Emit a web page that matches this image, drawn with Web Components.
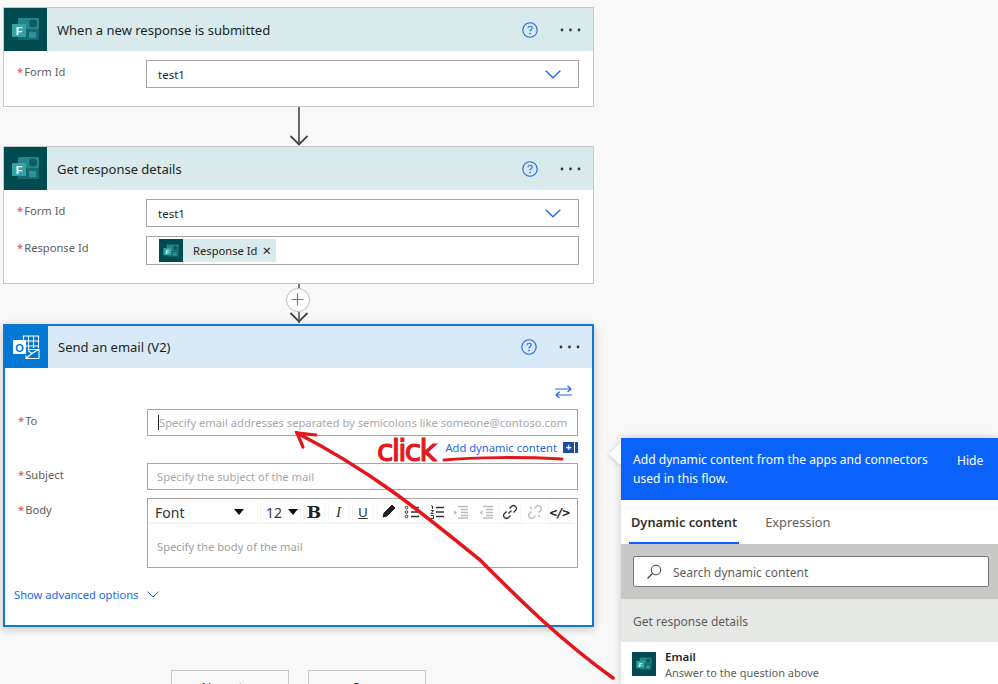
<!DOCTYPE html>
<html>
<head>
<meta charset="utf-8">
<title>Flow</title>
<style>
html, body { margin: 0; height: 684px; overflow: hidden; background: #f8f8f8; }
body { font-family: "Noto Sans", "Open Sans", sans-serif; font-size: 12px; color: #252423; }
</style>
</head>
<body>

<flow-canvas>
  <flow-card title="When a new response is submitted" icon="forms">
    <flow-field label="Form Id"><flow-input value="test1" dropdown></flow-input></flow-field>
  </flow-card>
  <flow-arrow></flow-arrow>
  <flow-card title="Get response details" icon="forms">
    <flow-field label="Form Id"><flow-input value="test1" dropdown></flow-input></flow-field>
    <flow-field label="Response Id"><flow-input token="Response Id"></flow-input></flow-field>
  </flow-card>
  <flow-arrow plus></flow-arrow>
  <flow-card title="Send an email (V2)" icon="outlook" active>
    <swap-row></swap-row>
    <flow-field label="To" tight><flow-input placeholder="Specify email addresses separated by semicolons like someone@contoso.com" caret></flow-input></flow-field>
    <dynamic-link></dynamic-link>
    <flow-field label="Subject" style="padding-bottom:8px"><flow-input placeholder="Specify the subject of the mail"></flow-input></flow-field>
    <flow-field label="Body"><rich-editor placeholder="Specify the body of the mail"></rich-editor></flow-field>
    <advanced-link></advanced-link>
  </flow-card>
  <flow-actions></flow-actions>
</flow-canvas>

<dynamic-panel></dynamic-panel>
<red-notes></red-notes>

<script>
const blue = '#2266ee'

const formsGlyph = (s) => `<svg width="${s}" height="${s}" viewBox="0 0 43 43">
  <rect x="14" y="10" width="21" height="11" rx="1" fill="#22868c"/>
  <circle cx="29" cy="15.5" r="4" fill="#0e5b61"/>
  <rect x="14" y="21" width="21" height="11" rx="1" fill="#146a70"/>
  <rect x="25" y="24" width="7" height="6" fill="#2a9298"/>
  <rect x="8" y="16" width="14" height="13" rx="1" fill="#30a3a8"/>
  <text x="15" y="27" text-anchor="middle" font-family="Liberation Sans" font-weight="700" font-size="11" fill="#fff">F</text>
</svg>`

const outlookGlyph = `<svg width="43" height="42" viewBox="0 0 43 42">
  <g fill="none" stroke="#fff" stroke-width="1.1">
    <path d="M18.500 14v-4h15v12M23.500 10v13M28.500 10v12M20 15h13.500M20 20h13.500"/>
    <path d="M22.500 23.500h11.500v9H21v-3M21.500 32l6-5M34 23l-7 4.500-4-3"/>
  </g>
  <rect x="8" y="14" width="13" height="14" rx="1" fill="#fff"/>
  <text x="14.5" y="25.500" text-anchor="middle" font-family="Liberation Sans" font-weight="700" font-size="11" fill="#0078d4">O</text>
</svg>`

class FlowCanvas extends HTMLElement {
  constructor() {
    super()
    this.attachShadow({ mode: 'open' }).innerHTML = `
    <style>
      :host { display: flex; flex-direction: column; width: 591px; height: 677px; overflow: hidden; padding: 7px 8px 0 3px; }
    </style>
    <slot></slot>`
  }
}

class FlowCard extends HTMLElement {
  constructor() {
    super()
    const outlook = this.getAttribute('icon') === 'outlook'
    this.attachShadow({ mode: 'open' }).innerHTML = `
    <style>
      :host { display: block; box-sizing: border-box; width: 591px; flex: none; background: #fff;
        border: 1px solid #c8c8c8; padding-bottom: 9px; }
      :host([active]) { border: 2px solid #0f78d2; padding-bottom: 0; height: 303px;
        box-shadow: 0 2px 8px rgba(0,0,0,.22); }
      .head { display: flex; align-items: center; height: 43px; background: #d8eaec; }
      :host([active]) .head { background: #d8e9f7; height: 42px; }
      .icon { width: 43px; height: 100%; background: #004b50; flex: none; display: flex; }
      :host([active]) .icon { background: #0078d4; }
      .name { flex: 1; margin-left: 10px; font-size: 13px; color: #201f1e; }
      .help { margin-right: 22px; display: block; }
      .dots { margin-right: 12px; display: block; }
      .body { padding-top: 9px; display: flex; flex-direction: column; }
      :host([active]) .body { padding-top: 14px; }
    </style>
    <div class="head">
      <div class="icon">${outlook ? outlookGlyph : formsGlyph(43)}</div>
      <div class="name">${this.getAttribute('title')}</div>
      <svg class="help" width="16" height="16" viewBox="0 0 16 16">
        <circle cx="8" cy="8" r="7.2" fill="none" stroke="${blue}" stroke-width="1.1"/>
        <path d="M5.9 6.2C6 4.8 7 4.2 8 4.2c1.2 0 2.1.8 2.1 1.9 0 1.7-2.1 1.6-2.1 3.4" fill="none" stroke="${blue}" stroke-width="1.1"/>
        <circle cx="8" cy="11.6" r=".8" fill="${blue}"/>
      </svg>
      <svg class="dots" width="21" height="4" viewBox="0 0 21 4">
        <circle cx="2" cy="2" r="1.4" fill="#333"/><circle cx="10.5" cy="2" r="1.4" fill="#333"/><circle cx="19" cy="2" r="1.4" fill="#333"/>
      </svg>
    </div>
    <div class="body"><slot></slot></div>`
  }
}

class FlowField extends HTMLElement {
  constructor() {
    super()
    this.attachShadow({ mode: 'open' }).innerHTML = `
    <style>
      :host { display: flex; padding: 0 14px 9px 13px; }
      :host([tight]) { padding-bottom: 0; }
      .label { width: 129px; flex: none; font-size: 11.2px; line-height: 18px; color: #605e5c; padding-top: 3px; }
      .label b { color: #e8414b; font-weight: 400; margin-right: 1px; }
      .slot { flex: 1; min-width: 0; }
    </style>
    <div class="label"><b>*</b>${this.getAttribute('label')}</div>
    <div class="slot"><slot></slot></div>`
  }
}

class FlowInput extends HTMLElement {
  constructor() {
    super()
    const value = this.getAttribute('value')
    const placeholder = this.getAttribute('placeholder')
    const token = this.getAttribute('token')
    this.attachShadow({ mode: 'open' }).innerHTML = `
    <style>
      :host { display: flex; align-items: center; box-sizing: border-box; height: 28px;
        border: 1px solid #a6a6a6; background: #fff; padding-left: 11px; font-size: 11.5px; }
      :host([token]) { padding-left: 12px; height: 29px; }
      :host([placeholder]) { height: 27px; padding-left: 9px; font-size: 11.2px; }
      :host([caret]) { padding-left: 10px; }
      .value { flex: 1; color: #252423; }
      .ph { flex: 1; color: #a8a8a8; white-space: nowrap; overflow: hidden; }
      .caret { width: 1px; height: 15px; background: #222; flex: none; }
      svg.chev { margin-right: 17px; display: block; }
      .token { display: flex; align-items: center; height: 23px; background: #d8eaec; padding-right: 5px; }
      .token i { width: 24px; height: 23px; background: #004b50; display: flex; margin-right: 10px; }
      .token span { font-size: 11.2px; }
      .token u { text-decoration: none; margin-left: 5px; font-size: 15px; line-height: 13px; }
    </style>
    ${this.hasAttribute('caret') ? '<div class="caret"></div>' : ''}
    ${value ? `<div class="value">${value}</div>` : ''}
    ${placeholder ? `<div class="ph">${placeholder}</div>` : ''}
    ${token ? `<div class="token"><i>${formsGlyph(24)}</i><span>${token}</span><u>×</u></div>` : ''}
    ${this.hasAttribute('dropdown') ? `<svg class="chev" width="16" height="9" viewBox="0 0 16 9"><path d="M.7.7 8 7.8 15.3.7" fill="none" stroke="${blue}" stroke-width="1.4"/></svg>` : ''}`
  }
}

class FlowArrow extends HTMLElement {
  constructor() {
    super()
    const plus = this.hasAttribute('plus')
    this.attachShadow({ mode: 'open' }).innerHTML = `
    <style>
      :host { display: flex; justify-content: center; position: relative; height: 39px; flex: none; }
      :host([plus]) { height: 40px; }
      svg { display: block; }
      .plus { position: absolute; left: 283px; top: 4px; width: 24px; height: 24px; box-sizing: border-box;
        border: 1.5px solid #bdbdbd; border-radius: 50%; background: #fff; display: flex; }
    </style>
    <svg width="24" height="${plus ? 40 : 39}" viewBox="0 0 24 ${plus ? 40 : 39}">
      ${plus ? '<path d="M12 0v5M12 28v11" stroke="#444" stroke-width="1.4"/>' : '<path d="M12 0v38" stroke="#444" stroke-width="1.6"/>'}
      <path d="M3.5 29l8.5 8.5 8.5-8.5" fill="none" stroke="#444" stroke-width="1.8"/>
    </svg>
    ${plus ? `<div class="plus"><svg width="21" height="21" viewBox="0 0 21 21"><path d="M10.5 4.5v12M4.5 10.5h12" stroke="#4a7fd6" stroke-width="1.2"/></svg></div>` : ''}`
  }
}

class SwapRow extends HTMLElement {
  constructor() {
    super()
    this.attachShadow({ mode: 'open' }).innerHTML = `
    <style>
      :host { display: flex; justify-content: flex-end; padding: 3px 20px 10px 0; }
      svg { display: block; }
    </style>
    <svg width="17" height="14" viewBox="0 0 17 14">
      <path d="M0 4h16M12.5.8 16 4l-3.5 3M17 10H1M4.500 6.800 1 10l3.500 3" fill="none" stroke="${blue}" stroke-width="1.2"/>
    </svg>`
  }
}

class DynamicLink extends HTMLElement {
  constructor() {
    super()
    this.attachShadow({ mode: 'open' }).innerHTML = `
    <style>
      :host { display: flex; justify-content: flex-end; align-items: center; box-sizing: border-box; height: 27px; padding: 0 14px 5px 0; font-size: 11.2px; color: ${blue}; }
      .box { width: 11px; height: 11px; background: #1e4fa8; color: #fff; margin-left: 6px; display: flex; align-items: center; justify-content: center; font-size: 10px; line-height: 10px; font-weight: 700; }
      .tail { width: 3px; height: 11px; background: #1e4fa8; margin-left: 1px; }
    </style>
    <span>Add dynamic content</span><span class="box">+</span><span class="tail"></span>`
  }
}

class RichEditor extends HTMLElement {
  constructor() {
    super()
    const btn = (inner, dim) => `<div class="btn${dim ? ' dim' : ''}">${inner}</div>`
    const ic = (d, extra = '') => `<svg width="16" height="16" viewBox="0 0 16 16"><path d="${d}" fill="none" stroke="currentColor" stroke-width="1.3"/>${extra}</svg>`
    const lines = 'M7 3.500h8M7 8h8M7 12.500h8'
    const indent = 'M5 2.500h10M8 5.500h7M8 8.500h7M8 11.500h7M5 14h10'
    this.attachShadow({ mode: 'open' }).innerHTML = `
    <style>
      :host { display: block; box-sizing: border-box; height: 70px; border: 1px solid #a6a6a6; background: #fff; }
      .bar { display: flex; gap: 2px; padding: 2px 2px 0; height: 22px; border-bottom: 1px solid #f2f2f2; box-sizing: content-box; }
      .pick { display: flex; align-items: center; box-shadow: 0 0 0 1px #f6f6f6 inset; font-size: 14px; color: #333; }
      .font { width: 108px; padding: 0 14px 0 5px; box-sizing: border-box; justify-content: space-between; }
      .size { width: 41px; padding: 0 3px 0 6px; box-sizing: border-box; justify-content: space-between; }
      .tri { width: 0; height: 0; border: 5.500px solid transparent; border-top: 6px solid #111; border-bottom: 0; }
      .btn { width: 22px; margin-right: 0.500px; display: flex; align-items: center; justify-content: center; color: #333; box-shadow: 0 0 0 1px #f6f6f6 inset; }
      .btn.dim { color: #bcbcbc; box-shadow: none; }
      .b { font: 700 17px "DejaVu Serif", serif; color: #222; }
      .i { font: italic 15px "Liberation Serif", serif; }
      .u { font: 13px "Liberation Sans", sans-serif; text-decoration: underline; }
      .code { font: 700 13px "DejaVu Sans Mono", monospace; letter-spacing: -1.500px; color: #222; }
      .ph { padding: 15px 9px 0; font-size: 11.2px; color: #a0a0a0; }
      svg { display: block; }
    </style>
    <div class="bar">
      <div class="pick font"><span>Font</span><span class="tri"></span></div>
      <div class="pick size"><span>12</span><span class="tri"></span></div>
      ${btn('<span class="b">B</span>')}
      ${btn('<span class="i">I</span>')}
      ${btn('<span class="u">U</span>')}
      ${btn(`<svg width="16" height="16" viewBox="0 0 16 16"><path d="M3 13l1-4 6-6 3 3-6 6zM10 3l2-2 3 3-2 2" fill="#222" stroke="#222"/></svg>`)}
      ${btn(ic(lines, '<g fill="none" stroke="currentColor"><circle cx="2.500" cy="3.500" r="1.300"/><circle cx="2.500" cy="8" r="1.300"/><circle cx="2.500" cy="12.500" r="1.300"/></g>'))}
      ${btn(ic(lines, '<path d="M2 2h1.500v3M2 6.500h2.500L2 9.500h2.500M2 11.500h2.500v3H2" fill="none" stroke="currentColor"/>'))}
      ${btn(ic(indent, '<path d="M1 6l3 2.500L1 11z" fill="currentColor"/>'), true)}
      ${btn(ic(indent, '<path d="M4.500 6l-3 2.500 3 2.500z" fill="currentColor"/>'), true)}
      ${btn(ic('M6.500 9.500 9.500 6.500M7.500 4.500 9.500 2.500a2.800 2.800 0 0 1 4 4l-2 2M8.500 11.500l-2 2a2.800 2.800 0 0 1-4-4l2-2'))}
      ${btn(ic('M7.500 4.500 9.500 2.500a2.800 2.800 0 0 1 4 4l-2 2M8.500 11.500l-2 2a2.800 2.800 0 0 1-4-4l2-2M3 3l2 2M13 13l-2-2'), true)}
      ${btn('<span class="code">&lt;/&gt;</span>')}
    </div>
    <div class="ph">${this.getAttribute('placeholder')}</div>`
  }
}

class AdvancedLink extends HTMLElement {
  constructor() {
    super()
    this.attachShadow({ mode: 'open' }).innerHTML = `
    <style>
      :host { display: flex; align-items: center; gap: 9px; padding: 10px 0 0 9px; font-size: 11.2px; color: ${blue}; }
    </style>
    <span>Show advanced options</span>
    <svg width="12" height="7" viewBox="0 0 12 7"><path d="M.5.500 6 6l5.500-5.500" fill="none" stroke="${blue}"/></svg>`
  }
}

class FlowActions extends HTMLElement {
  constructor() {
    super()
    this.attachShadow({ mode: 'open' }).innerHTML = `
    <style>
      :host { display: flex; gap: 19px; padding: 43px 0 0 168px; flex: none; }
      div { box-sizing: border-box; width: 118px; height: 34px; border: 1px solid #c8c8c8; background: #f8f8f8; text-align: center; font-size: 13px; line-height: 32px; }
    </style>
    <div>New step</div><div>Save</div>`
  }
}

class DynamicPanel extends HTMLElement {
  constructor() {
    super()
    this.attachShadow({ mode: 'open' }).innerHTML = `
    <style>
      :host { position: absolute; left: 621px; top: 438px; width: 377px; height: 246px; background: #fff; font-size: 12px;
        box-shadow: 0 0 8px rgba(0,0,0,.2); display: flex; flex-direction: column; }
      .ptr { position: absolute; left: -12px; top: 2px; width: 24px; height: 24px; filter: drop-shadow(-1px 1px 2px rgba(0,0,0,.15)); }
      .top { position: relative; height: 62px; background: #0a62fb; color: #fff; display: flex; padding: 12px 14px 0 12px; box-sizing: border-box; font-size: 12.1px; line-height: 19px; }
      .top p { margin: 0; flex: 1; max-width: 312px; }
      .top span { margin-left: 12px; padding-top: 1px; }
      .tabs { display: flex; height: 44px; font-size: 12.8px; padding-left: 8px; background: #fff; }
      .tab { padding: 0 2px; line-height: 44px; color: #605e5c; margin-right: 24px; box-sizing: border-box; height: 44px; }
      .tab.on { font-weight: 600; color: #323130; border-bottom: 2px solid #0a62fb; }
      .search { height: 55px; background: #c8c9c6; padding: 12px 9px 12px 12px; box-sizing: border-box; }
      .box { height: 31px; background: #fff; border: 1px solid #777; border-radius: 2px; box-sizing: border-box; display: flex; align-items: center; gap: 11px; padding-left: 12px; color: #605e5c; }
      .box span { padding-top: 1px; }
      .group { height: 43px; background: #e6e8e6; display: flex; align-items: center; padding: 1px 0 0 12px; box-sizing: border-box; color: #605e5c; }
      .item { display: flex; padding: 10px 0 0 11px; gap: 9px; }
      .item i { width: 24px; height: 24px; background: #004b50; display: flex; flex: none; }
      .item b { display: block; font-weight: 600; color: #252423; font-size: 11.500px; line-height: 16px; margin-top: -3px; }
      .item small { display: block; font-size: 11px; line-height: 16px; color: #605e5c; }
    </style>
    <svg class="ptr" width="24" height="24" viewBox="0 0 24 24"><path d="M12 2 0 14l12 12z" fill="#fff"/></svg>
    <div class="top"><p>Add dynamic content from the apps and connectors used in this flow.</p><span>Hide</span></div>
    <div class="tabs"><div class="tab on">Dynamic content</div><div class="tab">Expression</div></div>
    <div class="search"><div class="box">
      <svg width="16" height="16" viewBox="0 0 16 16"><circle cx="10" cy="6" r="4.800" fill="none" stroke="#444"/><path d="M6.500 9.500 1.500 14.500" stroke="#444" stroke-width="1.200"/></svg>
      <span>Search dynamic content</span>
    </div></div>
    <div class="group">Get response details</div>
    <div class="item"><i>${formsGlyph(24)}</i><div><b>Email</b><small>Answer to the question above</small></div></div>`
  }
}

class RedNotes extends HTMLElement {
  constructor() {
    super()
    this.attachShadow({ mode: 'open' }).innerHTML = `
    <style>
      :host { position: absolute; left: 0; top: 0; width: 998px; height: 684px; pointer-events: none; }
      svg { display: block; }
      text { font-family: "DejaVu Sans", sans-serif; font-size: 30px; fill: #e01a1f; stroke: #e01a1f; stroke-width: 1.2; letter-spacing: -1.800px; }
    </style>
    <svg width="998" height="684" viewBox="0 0 998 684">
      <path d="M613 678C560 640 520 600 480 560C430 520 380 476 297 433" fill="none" stroke="#e3161c" stroke-width="3.600" stroke-linecap="round"/>
      <path d="M316 435 297 433 303 447" fill="none" stroke="#e3161c" stroke-width="3.200" stroke-linecap="round"/>
      <path d="M444 460c30-3 80-3 118-1" fill="none" stroke="#e3161c" stroke-width="3" stroke-linecap="round"/>
      <text x="377" y="461">click</text>
    </svg>`
  }
}

customElements.define('flow-canvas', FlowCanvas)
customElements.define('flow-card', FlowCard)
customElements.define('flow-field', FlowField)
customElements.define('flow-input', FlowInput)
customElements.define('flow-arrow', FlowArrow)
customElements.define('swap-row', SwapRow)
customElements.define('dynamic-link', DynamicLink)
customElements.define('rich-editor', RichEditor)
customElements.define('advanced-link', AdvancedLink)
customElements.define('flow-actions', FlowActions)
customElements.define('dynamic-panel', DynamicPanel)
customElements.define('red-notes', RedNotes)
</script>
</body>
</html>
